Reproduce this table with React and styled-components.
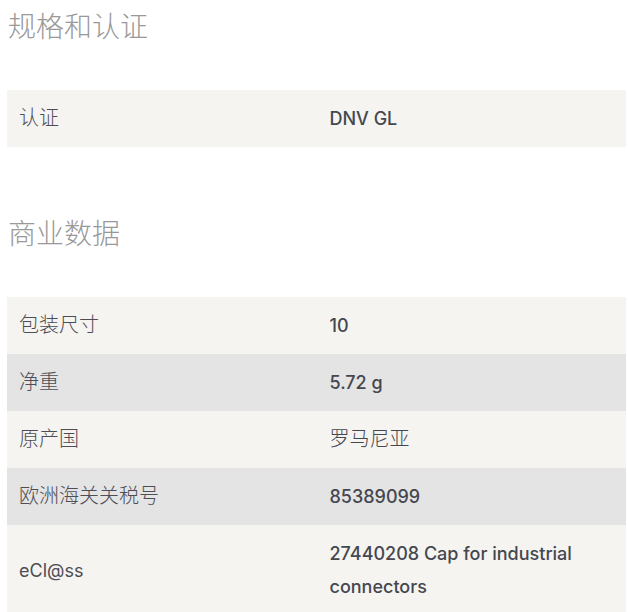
import styled, { createGlobalStyle } from "styled-components";

const GlobalStyle = createGlobalStyle`
  html, body {
    margin: 0;
    padding: 0;
    background: #ffffff;
  }
  body {
    font-family: "Inter", "Noto Sans CJK SC", sans-serif;
  }
`;

const sections = [
  {
    title: "规格和认证",
    rows: [{ label: "认证", value: "DNV GL" }],
  },
  {
    title: "商业数据",
    rows: [
      { label: "包装尺寸", value: "10" },
      { label: "净重", value: "5.72 g" },
      { label: "原产国", value: "罗马尼亚" },
      { label: "欧洲海关关税号", value: "85389099" },
      { label: "eCl@ss", value: "27440208 Cap for industrial connectors" },
    ],
  },
];

// CJK strings are set a touch larger and lighter than the latin ones
const hasCjk = (s) => /[\u3400-\u9fff]/.test(s);

const Page = styled.div`
  padding: 5px 2px 0 7px;
`;

const Section = styled.section`
  margin-bottom: 65px;
`;

const Title = styled.h2`
  margin: 0 0 45px;
  padding-left: 1px;
  font-size: 28px;
  line-height: 40px;
  font-weight: 300;
  color: #999999;
  font-family: "Noto Sans CJK SC", sans-serif;
`;

const Table = styled.div`
  display: flex;
  flex-direction: column;
`;

const Row = styled.div`
  display: grid;
  grid-template-columns: 1fr 1fr;
  align-items: center;
  background: ${(p) => (p.$shaded ? "#e4e4e4" : "#f5f4f1")};
`;

const Label = styled.div`
  padding: 12px;
  font-size: ${(p) => (p.$cjk ? "20px" : "18px")};
  line-height: 33px;
  color: #4d4d55;
  font-weight: ${(p) => (p.$cjk ? 300 : 400)};
`;

const Value = styled.div`
  padding: 12px 12px 12px 13px;
  font-size: ${(p) => (p.$cjk ? "20px" : "18px")};
  line-height: 33px;
  font-weight: ${(p) => (p.$cjk ? 300 : 500)};
  color: #45474f;
`;

export default function App() {
  return (
    <>
      <GlobalStyle />
      <Page>
        {sections.map((section) => (
          <Section key={section.title}>
            <Title>{section.title}</Title>
            <Table>
              {section.rows.map((row, i) => (
                <Row key={row.label} $shaded={i % 2 === 1}>
                  <Label $cjk={hasCjk(row.label)}>{row.label}</Label>
                  <Value $cjk={hasCjk(row.value)}>{row.value}</Value>
                </Row>
              ))}
            </Table>
          </Section>
        ))}
      </Page>
    </>
  );
}
